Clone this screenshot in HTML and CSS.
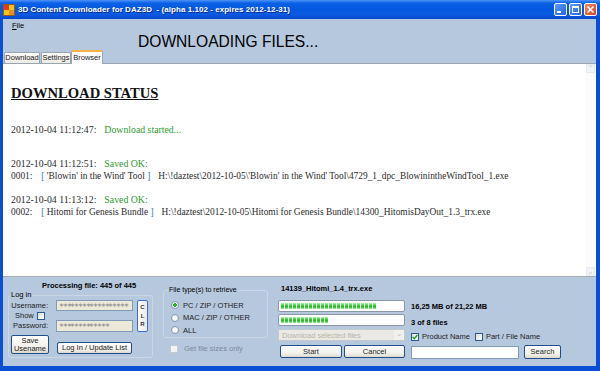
FILE: index.html
```html
<!DOCTYPE html>
<html lang="en">
<head>
    <meta charset="UTF-8">
    <title>3D Content Downloader for DAZ3D</title>
    <link rel="stylesheet" href="styles.css">
</head>
<body>

<div class="window">
    <!-- Barra de titulo -->
    <div class="titlebar">
        <svg class="app-icon" width="12" height="12" viewBox="0 0 12 12">
            <rect x="0" y="0" width="12" height="12" fill="#f6c419"/>
            <rect x="1" y="1" width="5" height="5" fill="#e5391a"/>
            <rect x="6" y="6" width="5" height="5" fill="#ef8a1c"/>
            <rect x="0.5" y="0.5" width="11" height="11" fill="none" stroke="#9a5a12"/>
        </svg>
        <span class="title">3D Content Downloader for DAZ3D&nbsp; - (alpha 1.102 - expires 2012-12-31)</span>
        <div class="win-btns">
            <span class="wb">
                <svg width="11" height="11" viewBox="0 0 11 11"><rect x="2" y="7" width="4" height="2" fill="#fff"/></svg>
            </span>
            <span class="wb">
                <svg width="11" height="11" viewBox="0 0 11 11"><rect x="2.5" y="2.5" width="6" height="6" fill="none" stroke="#fff"/><rect x="2" y="2" width="7" height="2" fill="#fff"/></svg>
            </span>
            <span class="wb close">
                <svg width="11" height="11" viewBox="0 0 11 11"><path d="M2.5 2.5 L8.5 8.5 M8.5 2.5 L2.5 8.5" stroke="#fff" stroke-width="1.6"/></svg>
            </span>
        </div>
    </div>

    <div class="frame">
        <div class="client">
            <div class="menubar"><span><u>F</u>ile</span></div>
            <div class="banner">DOWNLOADING FILES...</div>

            <!-- Pestanas -->
            <div class="tabs">
                <span class="tab tab-download">Download</span>
                <span class="tab tab-settings">Settings</span>
                <span class="tab tab-browser active">Browser</span>
            </div>

            <!-- Registro de descarga -->
            <div class="panel">
                <div class="log">
                    <h2 class="status-title">DOWNLOAD STATUS</h2>
                    <div class="entry first">
                        <p><span class="stamp">2012-10-04 11:12:47:</span><span class="ok">Download started...</span></p>
                    </div>
                    <div class="entry second">
                        <p><span class="stamp">2012-10-04 11:12:51:</span><span class="ok">Saved OK:</span></p>
                        <p><span class="num">0001:</span><span class="pkg"><span class="br">[</span> 'Blowin' in the Wind' Tool <span class="br">]</span></span><span class="path">H:\!daztest\2012-10-05\'Blowin' in the Wind' Tool\4729_1_dpc_BlowinintheWindTool_1.exe</span></p>
                    </div>
                    <div class="entry third">
                        <p><span class="stamp">2012-10-04 11:13:12:</span><span class="ok">Saved OK:</span></p>
                        <p><span class="num">0002:</span><span class="pkg"><span class="br">[</span> Hitomi for Genesis Bundle <span class="br">]</span></span><span class="path">H:\!daztest\2012-10-05\Hitomi for Genesis Bundle\14300_HitomisDayOut_1.3_trx.exe</span></p>
                    </div>
                </div>
                <div class="vscroll">
                    <span class="arrow up">&#8963;</span>
                    <span class="arrow down">&#8964;</span>
                </div>
            </div>

            <!-- Panel inferior -->
            <div class="bottom">
                <div class="col-login">
                    <div class="processing">Processing file: 445 of 445</div>
                    <fieldset class="group login-group">
                        <legend>Log in</legend>
                        <div class="login-grid">
                            <span class="lbl">Username:</span>
                            <span class="field pw">&#8727;&#8727;&#8727;&#8727;&#8727;&#8727;&#8727;&#8727;&#8727;&#8727;&#8727;&#8727;&#8727;&#8727;&#8727;&#8727;&#8727;&#8727;</span>
                            <span class="clr">C<br>L<br>R</span>
                            <span class="lbl show">Show <span class="check"></span></span>
                            <span class="lbl">Password:</span>
                            <span class="field pw">&#8727;&#8727;&#8727;&#8727;&#8727;&#8727;&#8727;&#8727;&#8727;&#8727;&#8727;&#8727;&#8727;</span>
                        </div>
                        <div class="login-btns">
                            <span class="btn save-btn">Save<br>Usename</span>
                            <span class="btn login-btn">Log In / Update List</span>
                        </div>
                    </fieldset>
                </div>

                <div class="col-types">
                    <fieldset class="group types-group">
                        <legend>File type(s) to retrieve</legend>
                        <div class="radio-row"><span class="radio on"></span>PC / ZIP / OTHER</div>
                        <div class="radio-row"><span class="radio"></span>MAC / ZIP / OTHER</div>
                        <div class="radio-row"><span class="radio"></span>ALL</div>
                    </fieldset>
                    <div class="sizes-only"><span class="check disabled"></span>Get file sizes only</div>
                </div>

                <div class="col-progress">
                    <div class="filename">14139_Hitomi_1.4_trx.exe</div>
                    <div class="bar"><div class="fill" style="width: 79%"></div></div>
                    <div class="bar"><div class="fill" style="width: 40%"></div></div>
                    <div class="combo">
                        <span>Download selected files</span>
                        <span class="combo-arrow">&#8964;</span>
                    </div>
                    <div class="action-btns">
                        <span class="btn start-btn">Start</span>
                        <span class="btn cancel-btn">Cancel</span>
                    </div>
                </div>

                <div class="col-info">
                    <div class="info size-info">16,25 MB of 21,22 MB</div>
                    <div class="info">3 of 8 files</div>
                    <div class="search-opts">
                        <span class="check checked">
                            <svg width="6" height="6" viewBox="0 0 6 6"><path d="M0.6 3 L2.3 4.8 L5.4 1" fill="none" stroke="#21a121" stroke-width="1.4"/></svg>
                        </span>
                        <span class="opt-text">Product Name</span>
                        <span class="check"></span>
                        <span class="opt-text">Part / File Name</span>
                    </div>
                    <div class="search-row">
                        <span class="field search-field"></span>
                        <span class="btn search-btn">Search</span>
                    </div>
                </div>
            </div>
        </div>
    </div>
</div>

</body>
</html>
```

FILE: styles.css
```css
* {
    box-sizing: border-box;
}
body {
    margin: 0;
    width: 600px;
    height: 371px;
    overflow: hidden;
    font-family: "Liberation Sans", Arial, sans-serif;
    font-size: 7.5px;
    color: #000;
}
.window {
    height: 371px;
    display: flex;
    flex-direction: column;
    background-color: #0a4ed4;
}

/* Barra de titulo */
.titlebar {
    height: 19px;
    display: flex;
    align-items: center;
    padding: 0 3px 0 3px;
    background: linear-gradient(#4d94f7 0, #0c62e6 3px, #0357e0 9px, #0a5be2 14px, #0848cc 19px);
}
.app-icon {
    margin-right: 3px;
}
.title {
    color: #fff;
    font-weight: bold;
    font-size: 8px;
    letter-spacing: 0.05px;
    text-shadow: 1px 1px 0 #0b2a8a;
}
.win-btns {
    margin-left: auto;
    display: flex;
    gap: 2px;
}
.wb {
    width: 13px;
    height: 13px;
    border: 1px solid #fff;
    border-radius: 2px;
    background: linear-gradient(135deg, #5c9bfb, #2463e0);
    display: flex;
    align-items: center;
    justify-content: center;
}
.wb.close {
    background: linear-gradient(135deg, #f08b66, #d6461f);
}

/* Marco y area cliente */
.frame {
    flex: 1;
    display: flex;
    padding: 0 4px 5px 3px;
}
.client {
    flex: 1;
    display: flex;
    flex-direction: column;
    background-color: #b6c8de;
}
.menubar {
    height: 14px;
    line-height: 14px;
    padding-left: 9px;
}
.banner {
    height: 18px;
    line-height: 18px;
    padding-left: 135px;
    font-size: 15.6px;
}

/* Pestanas */
.tabs {
    height: 12px;
    display: flex;
    align-items: flex-end;
    padding-left: 1px;
    position: relative;
    z-index: 1;
}
.tab {
    height: 11px;
    line-height: 10px;
    text-align: center;
    border: 1px solid #9aa5b0;
    border-bottom: none;
    border-radius: 2px 2px 0 0;
    background: linear-gradient(#fdfdfb, #eceae2);
    color: #222;
}
.tab-download {
    width: 36px;
}
.tab-settings {
    width: 30px;
    margin-left: 1px;
}
.tab-browser {
    width: 32px;
}
.tab.active {
    height: 14px;
    line-height: 11px;
    background: #fff;
    border-top: 2px solid #f4b247;
    margin-bottom: -1px;
}

/* Registro */
.panel {
    height: 214px;
    display: flex;
    background-color: #fff;
    border-top: 1px solid #9aa5b0;
    border-bottom: 1px solid #a4acb6;
}
.log {
    flex: 1;
    padding-left: 8px;
    font-family: "Liberation Serif", "Times New Roman", serif;
    font-size: 9.8px;
    color: #2b2b2b;
}
.log p {
    margin: 0;
    line-height: 12.5px;
    white-space: nowrap;
}
.status-title {
    margin: 21px 0 0 0;
    font-size: 14.6px;
    line-height: 17px;
    text-decoration: underline;
    color: #111;
}
.entry.first {
    margin-top: 22px;
}
.entry.second {
    margin-top: 21px;
}
.entry.third {
    margin-top: 11px;
}
.ok {
    color: #2f9a2f;
    margin-left: 8px;
}
.num,
.pkg,
.path {
    font-size: 9.4px;
}
.pkg {
    margin-left: 9px;
}
.br {
    color: #1f78b4;
}
.path {
    margin-left: 8px;
}
.vscroll {
    width: 9px;
    margin-right: 1px;
    display: flex;
    flex-direction: column;
    justify-content: space-between;
    background-color: #fbfbf9;
}
.arrow {
    height: 9px;
    background-color: #f1f3f6;
    border: 1px solid #e6e9ef;
    color: #cdd2da;
    font-size: 8px;
    line-height: 8px;
    text-align: center;
}

/* Panel inferior */
.bottom {
    flex: 1;
    display: flex;
}
.group {
    margin: 0;
    padding: 0;
    border: 1px solid #cbd7e5;
    border-radius: 3px;
}
.group legend {
    padding: 0 1px;
    margin-left: 1px;
    line-height: 8px;
    font-size: 7.5px;
}
.col-login {
    width: 157px;
}
.processing {
    margin: 4px 0 0 39px;
    line-height: 10px;
    font-weight: bold;
}
.login-group {
    margin-left: 5px;
    width: 144px;
    height: 67px;
}
.login-grid {
    display: grid;
    grid-template-columns: 39px 77px 11px;
    grid-template-rows: 11px 9px 12px;
    column-gap: 8px;
    margin-top: 1px;
}
.login-grid .clr {
    grid-column: 3;
    grid-row: 1 / span 3;
    margin-left: -4px;
}
.login-grid .show {
    grid-column: 1 / span 2;
}
.lbl {
    text-align: right;
    line-height: 11px;
    color: #222;
}
.lbl.show {
    text-align: left;
    padding-left: 6px;
    display: flex;
    align-items: center;
    gap: 3px;
    line-height: 9px;
    white-space: nowrap;
}
.field {
    background-color: #fff;
    border: 1px solid #7f9db9;
    height: 100%;
}
.pw {
    background-color: #ece9d8;
    color: #8a8a8a;
    font-size: 6px;
    line-height: 9px;
    padding-left: 2px;
    overflow: hidden;
    white-space: nowrap;
    letter-spacing: -1.2px;
}
.clr {
    width: 11px;
    border: 1px solid #3d6cc4;
    border-radius: 2px;
    background: linear-gradient(90deg, #fff, #eceae2);
    font-size: 6px;
    line-height: 8.5px;
    text-align: center;
    padding-top: 2px;
    font-weight: bold;
    color: #333;
}
.check {
    width: 8px;
    height: 8px;
    border: 1px solid #2a5a8e;
    background: linear-gradient(135deg, #dcdcd6, #fff);
    display: inline-flex;
    align-items: center;
    justify-content: center;
}
.check.disabled {
    border-color: #c6cad0;
    background: #f3f3f3;
}
.btn {
    display: flex;
    align-items: center;
    justify-content: center;
    text-align: center;
    border: 1px solid #1f4e8a;
    border-radius: 2px;
    background: linear-gradient(#ffffff, #f1efe8 70%, #dcd8cc);
    color: #222;
    line-height: 8px;
}
.login-btns {
    display: flex;
    align-items: flex-end;
    margin-top: 3px;
}
.save-btn {
    width: 38px;
    height: 19px;
    margin-left: 2px;
}
.login-btn {
    width: 75px;
    height: 12px;
    margin-left: 8px;
}

.col-types {
    width: 115px;
    padding-left: 3px;
}
.types-group {
    margin-top: 9px;
    width: 105px;
    height: 52px;
    padding-left: 7px;
}
.types-group legend {
    margin-left: -3px;
    font-size: 7px;
}
.radio-row {
    display: flex;
    align-items: center;
    height: 12.5px;
    gap: 4px;
    color: #222;
}
.radio-row:first-of-type {
    margin-top: 5px;
}
.radio {
    width: 8px;
    height: 8px;
    border-radius: 50%;
    border: 1px solid #8a9cb2;
    background: radial-gradient(circle, #fff 40%, #d9dee6);
}
.radio.on {
    background: radial-gradient(circle, #2cb22c 0 1.6px, #eafaea 2px, #fff 50%, #d9dee6);
}
.sizes-only {
    margin: 6px 0 0 7px;
    display: flex;
    align-items: center;
    gap: 6px;
    color: #7d8a9c;
}

.col-progress {
    width: 127px;
    margin-left: 3px;
    display: flex;
    flex-direction: column;
}
.filename {
    margin-top: 8px;
    line-height: 8px;
    font-weight: bold;
    padding-left: 3px;
}
.bar {
    height: 12px;
    margin-top: 7px;
    padding: 2px 2px;
    border: 1px solid #8a98ab;
    border-radius: 2px;
    background-color: #fff;
}
.bar + .bar {
    margin-top: 2px;
}
.fill {
    height: 100%;
    background:
        repeating-linear-gradient(90deg, transparent 0 3px, #fff 3px 4px),
        linear-gradient(#aef3ae, #30c830 45%, #27b927 60%, #8fe98f);
}
.combo {
    height: 12px;
    margin-top: 3px;
    display: flex;
    align-items: center;
    justify-content: space-between;
    padding-left: 3px;
    border: 1px solid #c4c9cf;
    background-color: #ebe9e3;
    color: #b7b4aa;
}
.combo-arrow {
    width: 10px;
    height: 10px;
    line-height: 8px;
    text-align: center;
    background-color: #f1f1ee;
    color: #c4c4c0;
}
.action-btns {
    display: flex;
    margin-top: 4px;
}
.start-btn {
    width: 62px;
    height: 13px;
    margin-left: 2px;
}
.cancel-btn {
    width: 61px;
    height: 13px;
    margin-left: 2px;
}

.col-info {
    margin-left: 6px;
    display: flex;
    flex-direction: column;
}
.info {
    font-weight: bold;
    line-height: 9px;
}
.size-info {
    margin-top: 25px;
}
.info + .info {
    margin-top: 7px;
}
.search-opts {
    display: flex;
    align-items: center;
    margin-top: 5px;
    height: 9px;
    color: #222;
}
.search-opts .opt-text {
    margin-left: 3px;
    margin-right: 5px;
}
.search-row {
    display: flex;
    align-items: center;
    margin-top: 4px;
}
.search-field {
    width: 108px;
    height: 13px;
}
.search-btn {
    width: 37px;
    height: 14px;
    margin-left: 5px;
}
```
